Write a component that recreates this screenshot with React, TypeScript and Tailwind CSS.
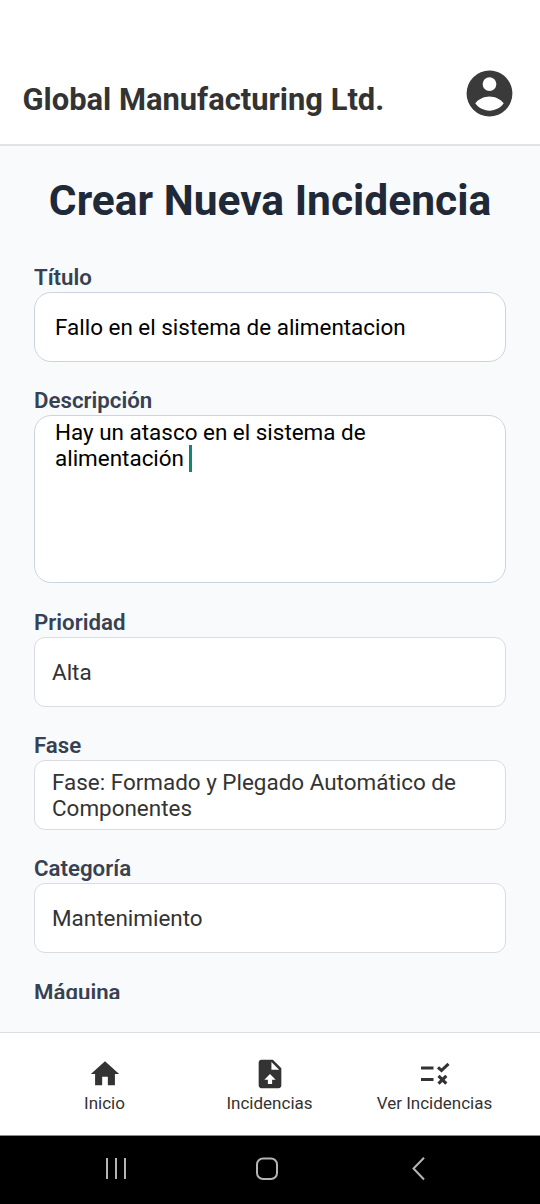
import React from "react";

function Icon({ d, size, className }: { d: string; size: number; className?: string }) {
  return (
    <svg viewBox="0 0 24 24" width={size} height={size} fill="currentColor" className={className}>
      <path d={d} />
    </svg>
  );
}

const ACCOUNT =
  "M12,19.5C9.4,19.5 7,18.1 5.8,16.3C7,14.5 9.6,13.3 12,13.3C14.4,13.3 17,14.5 18.2,16.3C17,18.1 14.6,19.5 12,19.5M12,4.9A3,3 0 0,1 15,7.9A3,3 0 0,1 12,10.9A3,3 0 0,1 9,7.9A3,3 0 0,1 12,4.9M12,2A10,10 0 0,0 2,12A10,10 0 0,0 12,22A10,10 0 0,0 22,12C22,6.47 17.5,2 12,2Z";
const HOME = "M10,20V14H14V20H19V12H22L12,3L2,12H5V20H10Z";
const FILE_UPLOAD =
  "M14,2H6C4.89,2 4,2.9 4,4V20A2,2 0 0,0 6,22H18A2,2 0 0,0 20,20V8L14,2M13.5,16V19H10.5V16H8L12,12L16,16H13.5M13,9V3.5L18.5,9H13Z";

function Label({ children }: { children: React.ReactNode }) {
  return (
    <div className="h-[30px] shrink-0 whitespace-nowrap text-[22.25px] font-semibold leading-[30px] text-[#374151]">
      {children}
    </div>
  );
}

function Select({ label, children }: { label: string; children: React.ReactNode }) {
  return (
    <div className="flex flex-col">
      <Label>{label}</Label>
      <div className="flex h-[70px] items-center rounded-[11px] border border-[#d9dce1] bg-white px-[17px] pt-px text-[22.45px] leading-[26.5px] text-[#333333]">
        <span>{children}</span>
      </div>
    </div>
  );
}

function Tab({ label, children }: { label: string; children: React.ReactNode }) {
  return (
    <div className="flex w-[165px] flex-col items-center text-[#333333]">
      {children}
      <span className="mr-px mt-[2px] whitespace-nowrap text-[17px] leading-[20px]">{label}</span>
    </div>
  );
}

export default function App() {
  return (
    <div className="flex h-[1204px] w-[540px] flex-col overflow-hidden bg-[#f9fafb] font-[Roboto,sans-serif]">
      <header className="flex h-[146px] shrink-0 items-start justify-between border-b-2 border-[#e2e3e5] bg-white pl-[22.500px] pr-[23px] pt-[66px]">
        <div className="mt-[16px] whitespace-nowrap text-[30.9px] font-bold leading-[36px] text-[#333333]">
          Global Manufacturing Ltd.
        </div>
        <Icon d={ACCOUNT} size={55} className="text-[#3a3a3a]" />
      </header>

      <main className="flex h-[853px] shrink-0 flex-col overflow-hidden px-[34px]">
        <h1 className="mt-[30px] h-[50px] shrink-0 whitespace-nowrap text-center text-[42.5px] font-bold leading-[50px] text-[#1f2937]">
          Crear Nueva Incidencia
        </h1>
        <div className="mt-[36px] flex flex-col gap-[23.3px]">
          <div className="flex flex-col">
            <Label>Título</Label>
            <div className="flex h-[70px] items-center rounded-[17px] border border-[#cbd5e1] bg-white px-[20px] pt-[2px] text-[22.45px] text-black">
              Fallo en el sistema de alimentacion
            </div>
          </div>
          <div className="flex flex-col">
            <Label>Descripción</Label>
            <div className="h-[168px] rounded-[17px] border border-[#cbd5e1] bg-white px-[20px] pt-[3px] text-[22.45px] leading-[26px] text-black">
              <div>Hay un atasco en el sistema de</div>
              <div className="flex">
                alimentación
                <span className="ml-[5px] h-[27px] w-[3px] bg-[#128577]" />
              </div>
            </div>
          </div>
          <Select label="Prioridad">Alta</Select>
          <Select label="Fase">
            Fase: Formado y Plegado Automático de
            <br />
            Componentes
          </Select>
          <Select label="Categoría">Mantenimiento</Select>
          <div className="pt-px">
            <Label>Máquina</Label>
          </div>
        </div>
      </main>

      <nav className="mt-[33px] flex h-[104px] shrink-0 justify-center border-b border-t border-b-[#8a8a8a] border-t-[#dcdee1] bg-white pt-[24px]">
        <Tab label="Inicio">
          <Icon d={HOME} size={34} />
        </Tab>
        <Tab label="Incidencias">
          <Icon d={FILE_UPLOAD} size={34} />
        </Tab>
        <Tab label="Ver Incidencias">
          <svg width="34" height="34" fill="none" stroke="currentColor" strokeWidth="3.1">
            <path d="M3 11H15.5M3 22.500H15.500M20 10.300L23.500 13.500L30.500 6.800M20.500 18.800L28.300 26.600M28.300 18.800L20.500 26.600" />
          </svg>
        </Tab>
      </nav>

      <footer className="flex h-[68px] shrink-0 bg-black pl-[105px] pt-[21px] text-[#b5b5b5]">
        <svg width="340" height="24" fill="none" stroke="currentColor" strokeWidth="2">
          <path d="M2 1V22M11 1V22M20 1V22" />
          <rect x="152" y="1.5" width="20" height="20.5" rx="6" />
          <path d="M319 .8L308.500 11.500L319 22.500" />
        </svg>
      </footer>
    </div>
  );
}
